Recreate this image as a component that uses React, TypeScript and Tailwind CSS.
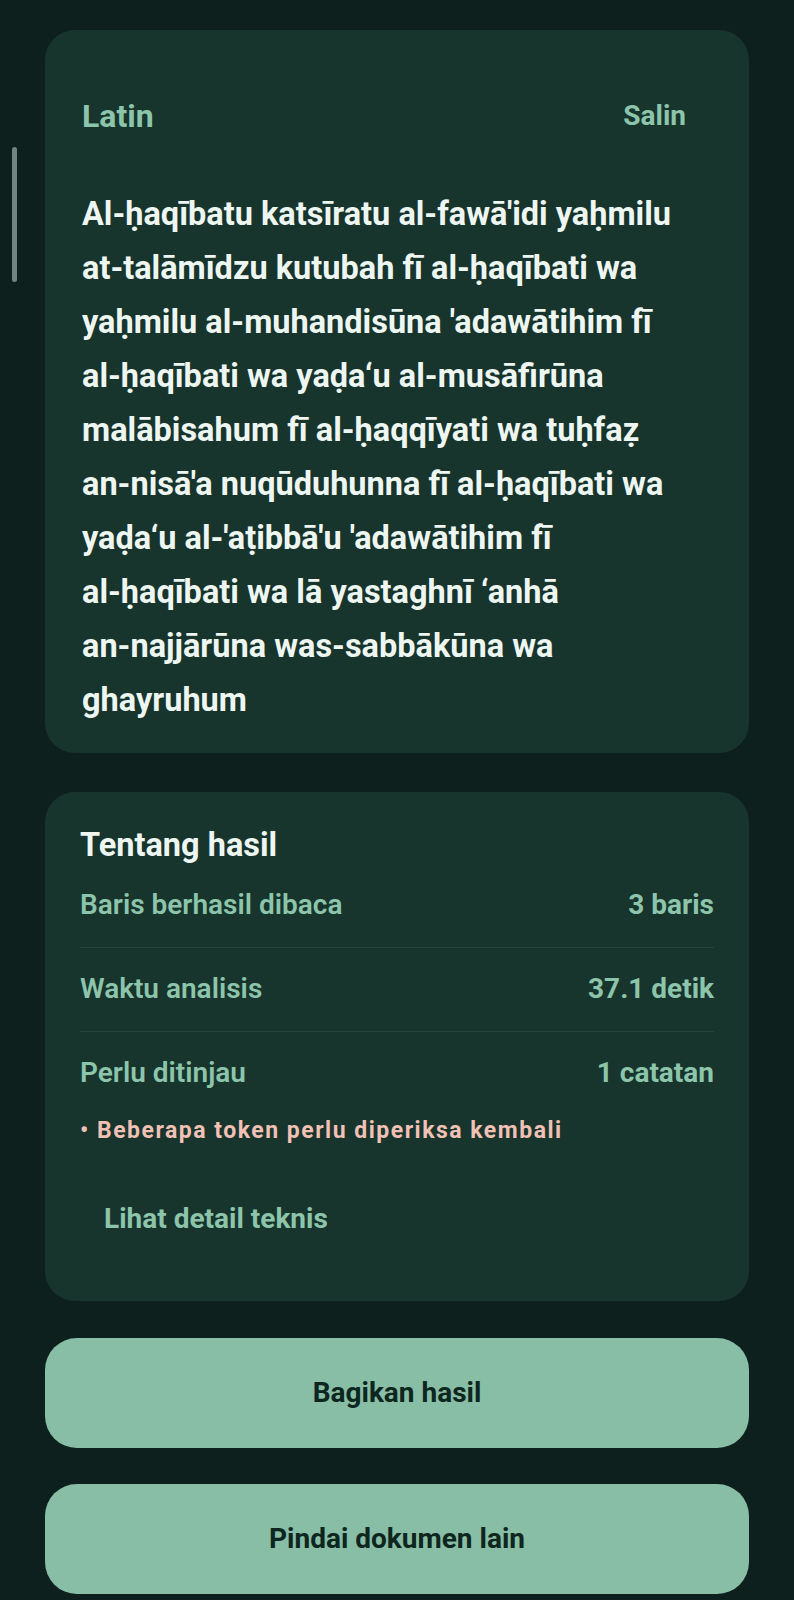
import React from "react";

const rows = [
  { label: "Baris berhasil dibaca", value: "3 baris" },
  { label: "Waktu analisis", value: "37.1 detik" },
  { label: "Perlu ditinjau", value: "1 catatan" },
];

const latin =
  "Al-ḥaqībatu katsīratu al-fawā'idi yaḥmilu at-talāmīdzu kutubah fī al-ḥaqībati wa yaḥmilu al-muhandisūna 'adawātihim fī al-ḥaqībati wa yaḍa‘u al-musāfirūna malābisahum fī al-ḥaqqīyati wa tuḥfaẓ an-nisā'a nuqūduhunna fī al-ḥaqībati wa yaḍa‘u al-'aṭibbā'u 'adawātihim fī al-ḥaqībati wa lā yastaghnī ‘anhā an-najjārūna was-sabbākūna wa ghayruhum";

export default function App(): JSX.Element {
  const words = latin.split(" ");
  return (
    <div className="relative min-h-[1600px] w-[794px] bg-[#0e201d] pt-[30px] font-['Roboto',sans-serif]">
      {/* scroll indicator */}
      <div className="absolute left-[12px] top-[147px] h-[135px] w-[5px] rounded-full bg-[#72847f]" />

      <div className="mx-[45px] flex flex-col">
        <section className="rounded-[30px] bg-[#17342d] pb-[26px] pl-[37px] pr-[39px] pt-[68px]">
          <div className="flex items-center justify-between">
            <h2 className="text-[32px] font-bold leading-[36px] text-[#8cc5aa]">Latin</h2>
            <button className="-mr-[0px] px-[24px] text-[28px] font-bold leading-[36px] text-[#8cc5aa]">Salin</button>
          </div>
          <p className="mt-[53px] text-[32.5px] font-bold leading-[54px] text-[#eef6f1]">
            {words.map((w, i) => (
              <React.Fragment key={i}>
                <span className="whitespace-nowrap">{w}</span>
                {i < words.length - 1 ? " " : ""}
              </React.Fragment>
            ))}
          </p>
        </section>

        <section className="mt-[39px] rounded-[30px] bg-[#17342d] px-[35px] pb-[65px] pt-[34px]">
          <h3 className="text-[32.5px] font-bold leading-[38px] text-[#eef6f1]">Tentang hasil</h3>
          <div className="flex flex-col">
            {rows.map((r, i) => (
              <div
                key={r.label}
                className={
                  i < rows.length - 1
                    ? "flex items-center justify-between border-b border-[#24453c] pb-[25px] pt-[24px]"
                    : "flex items-center justify-between pb-[25px] pt-[24px]"
                }
              >
                <span className="text-[28px] font-semibold leading-[34px] text-[#8cc5aa]">{r.label}</span>
                <span className="text-[28px] font-bold leading-[34px] text-[#8cc5aa]">{r.value}</span>
              </div>
            ))}
          </div>
          <p className="mt-[2px] text-[23px] font-bold leading-[28px] tracking-[1.5px] text-[#f1c1b5]">
            • Beberapa token perlu diperiksa kembali
          </p>
          <button className="mt-[57px] px-[24px] text-[28px] font-bold leading-[34px] text-[#8cc5aa]">
            Lihat detail teknis
          </button>
        </section>

        <button className="mt-[37px] h-[110px] rounded-[32px] bg-[#88bea5] text-[28px] font-bold text-[#0e2620]">
          Bagikan hasil
        </button>
        <button className="mt-[36px] h-[110px] rounded-[32px] bg-[#88bea5] text-[28px] font-bold text-[#0e2620]">
          Pindai dokumen lain
        </button>
      </div>
    </div>
  );
}
